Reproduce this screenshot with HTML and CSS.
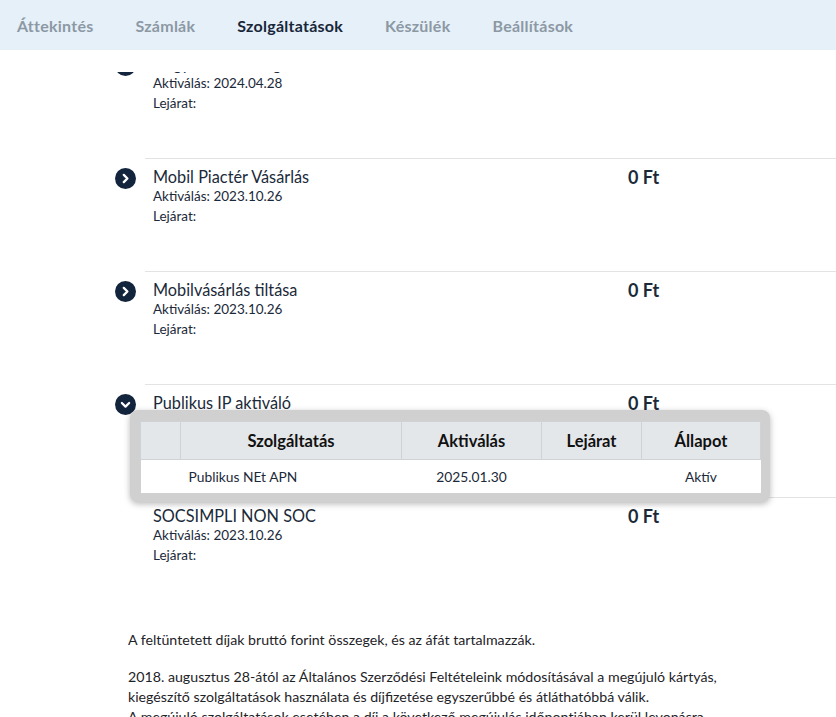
FILE: index.html
```html
<!DOCTYPE html>
<html lang="hu">
<head>
<meta charset="utf-8">
<title>Szolgáltatások</title>
<link rel="stylesheet" href="styles.css">
</head>
<body>
<header class="topbar">
  <nav class="tabs">
    <span class="tab">Áttekintés</span>
    <span class="tab">Számlák</span>
    <span class="tab tab-active">Szolgáltatások</span>
    <span class="tab">Készülék</span>
    <span class="tab">Beállítások</span>
  </nav>
  <div class="topbar-gap"></div>
</header>

<main class="content">
  <ul class="services">
    <li class="service">
      <span class="toggle"><svg viewBox="0 0 22 22" width="21" height="21"><circle cx="11" cy="11" r="11" fill="#13243d"/><path d="M9.2 7.2 L13 11 L9.2 14.8" fill="none" stroke="#fff" stroke-width="2.4" stroke-linecap="round" stroke-linejoin="round"/></svg></span>
      <div class="info">
        <div class="name">Nagy Adatcsomag</div>
        <div class="meta">Aktiválás: 2024.04.28</div>
        <div class="meta">Lejárat:</div>
      </div>
      <div class="price">0 Ft</div>
    </li>
    <li class="service">
      <span class="toggle"><svg viewBox="0 0 22 22" width="21" height="21"><circle cx="11" cy="11" r="11" fill="#13243d"/><path d="M9.2 7.2 L13 11 L9.2 14.8" fill="none" stroke="#fff" stroke-width="2.4" stroke-linecap="round" stroke-linejoin="round"/></svg></span>
      <div class="info">
        <div class="name">Mobil Piactér Vásárlás</div>
        <div class="meta">Aktiválás: 2023.10.26</div>
        <div class="meta">Lejárat:</div>
      </div>
      <div class="price">0 Ft</div>
    </li>
    <li class="service">
      <span class="toggle"><svg viewBox="0 0 22 22" width="21" height="21"><circle cx="11" cy="11" r="11" fill="#13243d"/><path d="M9.2 7.2 L13 11 L9.2 14.8" fill="none" stroke="#fff" stroke-width="2.4" stroke-linecap="round" stroke-linejoin="round"/></svg></span>
      <div class="info">
        <div class="name">Mobilvásárlás tiltása</div>
        <div class="meta">Aktiválás: 2023.10.26</div>
        <div class="meta">Lejárat:</div>
      </div>
      <div class="price">0 Ft</div>
    </li>
    <li class="service service-open">
      <span class="toggle"><svg viewBox="0 0 22 22" width="21" height="21"><circle cx="11" cy="11" r="11" fill="#13243d"/><path d="M7.2 9.4 L11 13.2 L14.8 9.4" fill="none" stroke="#fff" stroke-width="2.4" stroke-linecap="round" stroke-linejoin="round"/></svg></span>
      <div class="info">
        <div class="name">Publikus IP aktiváló</div>
        <div class="meta">Aktiválás: 2023.10.26</div>
        <div class="meta">Lejárat:</div>
      </div>
      <div class="price">0 Ft</div>
      <div class="details">
        <table class="details-table">
          <colgroup>
            <col class="c1"><col class="c2"><col class="c3"><col class="c4"><col class="c5">
          </colgroup>
          <thead>
            <tr><th class="blank"></th><th>Szolgáltatás</th><th>Aktiválás</th><th>Lejárat</th><th>Állapot</th></tr>
          </thead>
          <tbody>
            <tr><td class="blank"></td><td class="left">Publikus NEt APN</td><td>2025.01.30</td><td></td><td>Aktív</td></tr>
          </tbody>
        </table>
      </div>
    </li>
    <li class="service">
      <span class="toggle toggle-none"></span>
      <div class="info">
        <div class="name">SOCSIMPLI NON SOC</div>
        <div class="meta">Aktiválás: 2023.10.26</div>
        <div class="meta">Lejárat:</div>
      </div>
      <div class="price">0 Ft</div>
    </li>
  </ul>

  <div class="notes">
    <p>A feltüntetett díjak bruttó forint összegek, és az áfát tartalmazzák.</p>
    <p>2018. augusztus 28-ától az Általános Szerződési Feltételeink módosításával a megújuló kártyás,<br>kiegészítő szolgáltatások használata és díjfizetése egyszerűbbé és átláthatóbbá válik.<br>A megújuló szolgáltatások esetében a díj a következő megújulás időpontjában kerül levonásra.</p>
  </div>
</main>
</body>
</html>
```

FILE: styles.css
```css
html, body {
  margin: 0;
  padding: 0;
  background: #ffffff;
  font-family: Lato, "Noto Sans", "Liberation Sans", sans-serif;
  color: #1b2a3a;
}

.topbar {
  position: fixed;
  top: 0;
  left: 0;
  right: 0;
  z-index: 10;
}

.tabs {
  display: flex;
  align-items: center;
  gap: 42px;
  height: 50px;
  padding-left: 17px;
  background: #e5f0f8;
}

.tab {
  font-size: 16px;
  font-weight: 700;
  color: #8c98a4;
  letter-spacing: 0.25px;
}

.tab-active {
  color: #172638;
}

.topbar-gap {
  height: 22px;
  background: #ffffff;
}

.content {
  padding: 45px 0 0 128px;
}

.services {
  list-style: none;
  margin: 0 0 0 17px;
  padding: 0;
}

.service {
  position: relative;
  display: flex;
  align-items: flex-start;
  border-top: 1px solid #e3e3e3;
  padding: 8px 0 45px 8px;
}

.toggle {
  width: 21px;
  height: 21px;
  margin: 1px 17px 0 -38px;
  flex: none;
  display: block;
}

.toggle svg {
  display: block;
}

.info {
  width: 475px;
  flex: none;
}

.name {
  font-size: 16.3px;
  line-height: 20px;
  height: 20px;
}

.meta {
  font-size: 13.5px;
  line-height: 19.5px;
}

.price {
  font-size: 18px;
  font-weight: 700;
  line-height: 20px;
}

.details {
  position: absolute;
  left: -15px;
  top: 25px;
  width: 620px;
  padding: 11px 10px 9px 10px;
  background: #d0d0d0;
  border-radius: 8px;
  box-shadow: 0 2px 6px rgba(0, 0, 0, 0.28);
  z-index: 5;
}

.details-table {
  width: 620px;
  border-collapse: collapse;
  table-layout: fixed;
  font-size: 13.8px;
}

.details-table .c1 { width: 40px; }
.details-table .c2 { width: 221px; }
.details-table .c3 { width: 140px; }
.details-table .c4 { width: 100px; }
.details-table .c5 { width: 119px; }

.details-table th {
  height: 37px;
  padding: 0;
  background: #e4e7ea;
  border: 1px solid #cfd3d7;
  font-size: 16.5px;
  font-weight: 700;
  color: #111111;
  text-align: center;
}

.details-table td {
  height: 33px;
  padding: 0;
  background: #ffffff;
  text-align: center;
  color: #1b2a3a;
}

.details-table td.left {
  text-align: left;
  padding-left: 8px;
}

.notes {
  padding-top: 20px;
  font-size: 14.2px;
  line-height: 20px;
  color: #1e2327;
}

.notes p {
  margin: 0 0 17px 0;
}
```
